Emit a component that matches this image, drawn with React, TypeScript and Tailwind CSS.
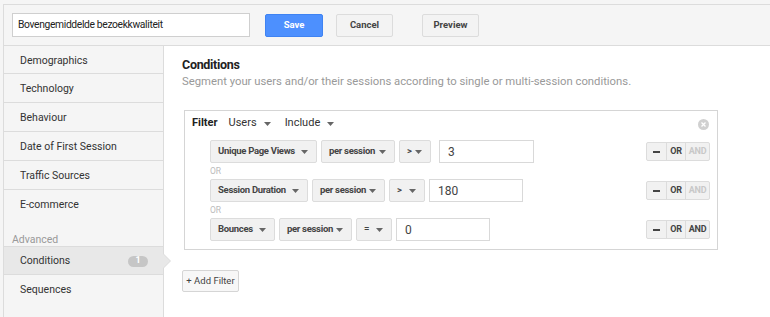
import React from "react";

const Caret = () => (
  <svg width="7" height="4" viewBox="0 0 7 4" className="shrink-0">
    <path d="M0 0 L7 0 L3.5 4 Z" fill="#666" />
  </svg>
);

const Sel = ({ label, w }: { label: string; w: string }) => (
  <div
    className={`${w} h-[23px] flex items-center justify-between pl-[7px] pr-[8px] bg-[#f1f1f1] border border-[#dcdcdc] rounded-[2px] text-[9.5px] font-bold text-[#444] whitespace-nowrap tracking-[-0.3px]`}
  >
    <span>{label}</span>
    <Caret />
  </div>
);

const Input = ({ v, w }: { v: string; w: string }) => (
  <div
    className={`${w} h-[23px] flex items-center pl-[8px] bg-white border border-[#d9d9d9] text-[12px] text-[#444]`}
  >
    {v}
  </div>
);

const Ops = ({ andOn }: { andOn: boolean }) => (
  <div className="flex h-[19px] border border-[#dcdcdc] rounded-[2px] bg-[#f1f1f1] text-[9px] font-bold tracking-[-0.2px]">
    <div className="w-[20px] flex items-center justify-center text-[#444] border-r border-[#dcdcdc]">
      <div className="w-[7px] h-[2px] bg-[#444]" />
    </div>
    <div className="w-[19px] flex items-center justify-center text-[#444] border-r border-[#dcdcdc]">OR</div>
    <div className={`w-[23px] flex items-center justify-center ${andOn ? "text-[#444]" : "text-[#c8c8c8]"}`}>AND</div>
  </div>
);

const Row = ({
  items,
  andOn,
}: {
  items: React.ReactNode;
  andOn: boolean;
}) => (
  <div className="flex items-center justify-between pr-[7px]">
    <div className="flex items-center gap-[4px]">{items}</div>
    <Ops andOn={andOn} />
  </div>
);

const OrLabel = () => (
  <div className="h-[16px] flex items-center text-[8.5px] text-[#bbb] font-normal">OR</div>
);

export default function App() {
  const navTop = [
    "Demographics",
    "Technology",
    "Behaviour",
    "Date of First Session",
    "Traffic Sources",
    "E-commerce",
  ];
  return (
    <div
      className="w-[770px] h-[317px] overflow-hidden bg-[#f5f5f5] text-[#333]"
      style={{ fontFamily: "Roboto, 'Liberation Sans', Arial, sans-serif" }}
    >
      <div className="mt-[4px] ml-[3px] h-[313px] border-t border-l border-[#dcdcdc] flex flex-col">
        {/* top bar */}
        <div className="h-[40px] flex items-center pl-[8px] bg-[#f5f5f5] shrink-0">
          <div className="w-[238px] h-[24px] bg-white border border-[#cfcfcf] flex items-center pl-[5px] text-[10.3px] tracking-[-0.35px] text-[#222]">
            Bovengemiddelde bezoekkwaliteit
          </div>
          <div className="ml-[15px] w-[58px] h-[23px] bg-[#4d90fe] border border-[#3f83f2] rounded-[2px] flex items-center justify-center text-[9.5px] font-bold text-white">
            Save
          </div>
          <div className="ml-[13px] w-[57px] h-[23px] bg-[#f3f3f3] border border-[#dcdcdc] rounded-[2px] flex items-center justify-center text-[9.5px] font-bold text-[#444]">
            Cancel
          </div>
          <div className="ml-[29px] w-[57px] h-[23px] bg-[#f3f3f3] border border-[#dcdcdc] rounded-[2px] flex items-center justify-center text-[9.5px] font-bold text-[#444]">
            Preview
          </div>
        </div>
        {/* body */}
        <div className="flex flex-1 border-t border-[#dcdcdc]">
          {/* sidebar */}
          <div className="w-[160px] shrink-0 bg-[#f5f5f5] border-r border-[#dcdcdc] flex flex-col text-[10.5px] text-[#333]">
            {navTop.map((n, i) => (
              <div
                key={n}
                className={`${i === 0 ? "h-[28px]" : "h-[29px]"} flex items-center pl-[16px] ${i < navTop.length - 1 ? "border-b border-[#dcdcdc] pt-[2px]" : ""}`}
              >
                {n}
              </div>
            ))}
            <div className="h-[27px] flex items-end pl-[8px] text-[10.5px] leading-[12px] text-[#999]">Advanced</div>
            <div className="relative h-[29px] flex items-center justify-between pl-[16px] pr-[15px] pt-[1px] bg-[#e8e8e8] border-y border-[#dcdcdc]">
              <span>Conditions</span>
              <span className="w-[20px] h-[11px] rounded-full bg-[#c6c6c6] text-white text-[9px] font-bold flex items-center justify-center">
                1
              </span>
              <div className="absolute right-[-8px] top-[6px] w-0 h-0 border-y-[8px] border-y-transparent border-l-[8px] border-l-[#dcdcdc]" />
              <div className="absolute right-[-7px] top-[7px] w-0 h-0 border-y-[7px] border-y-transparent border-l-[7px] border-l-[#e8e8e8]" />
            </div>
            <div className="h-[29px] flex items-center pl-[16px] pt-[1px]">Sequences</div>
          </div>
          {/* main */}
          <div className="flex-1 bg-white pl-[18px] pt-[11px]">
            <div className="text-[12.5px] font-bold text-[#222] leading-[16px] tracking-[-0.3px]">Conditions</div>
            <div className="text-[11.3px] text-[#999] leading-[16px] mt-[1px]">
              Segment your users and/or their sessions according to single or multi-session conditions.
            </div>
            <div className="ml-[2px] mt-[20px] w-[534px] h-[140px] border border-[#d5d5d5] pl-[25px] relative">
              <div className="h-[25px] mb-[4px] flex items-center -ml-[18px] text-[11px]">
                <span className="font-bold text-[#222]">Filter</span>
                <span className="ml-[11px] text-[#333]">Users</span>
                <span className="ml-[7px]"><Caret /></span>
                <span className="ml-[14px] text-[#333]">Include</span>
                <span className="ml-[7px]"><Caret /></span>
              </div>
              <div className="absolute right-[8px] top-[8px] w-[11px] h-[11px] rounded-full bg-[#d0d0d0] flex items-center justify-center">
                <svg width="5" height="5" viewBox="0 0 5 5">
                  <path d="M0.5 0.5 L4.5 4.5 M4.5 0.5 L0.5 4.5" stroke="white" strokeWidth="1.3" />
                </svg>
              </div>
              <Row
                andOn={false}
                items={
                  <>
                    <Sel label="Unique Page Views" w="w-[107px]" />
                    <Sel label="per session" w="w-[74px]" />
                    <Sel label=">" w="w-[32px]" />
                    <Input v="3" w="w-[95px] ml-[4px]" />
                  </>
                }
              />
              <OrLabel />
              <Row
                andOn={false}
                items={
                  <>
                    <Sel label="Session Duration" w="w-[98px]" />
                    <Sel label="per session" w="w-[73px]" />
                    <Sel label=">" w="w-[36px]" />
                    <Input v="180" w="w-[94px]" />
                  </>
                }
              />
              <OrLabel />
              <Row
                andOn={true}
                items={
                  <>
                    <Sel label="Bounces" w="w-[65px]" />
                    <Sel label="per session" w="w-[73px]" />
                    <Sel label="=" w="w-[36px]" />
                    <Input v="0" w="w-[94px]" />
                  </>
                }
              />
            </div>
            <div className="mt-[20px] w-[57px] h-[22px] border border-[#d5d5d5] rounded-[2px] bg-[#f7f7f7] flex items-center justify-center text-[9.5px] text-[#444]">
              + Add Filter
            </div>
          </div>
        </div>
      </div>
    </div>
  );
}
